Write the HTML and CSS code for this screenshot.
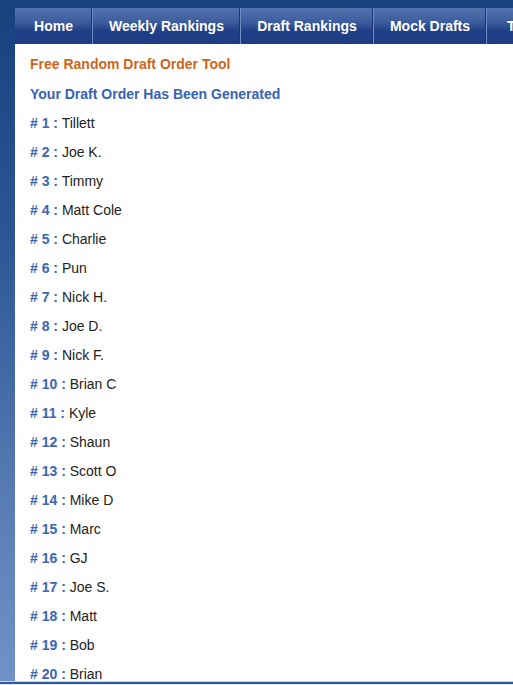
FILE: index.html
```html
<!DOCTYPE html>
<html lang="en">
<head>
  <meta charset="UTF-8">
  <meta name="viewport" content="width=device-width, initial-scale=1.0">
  <title>Free Random Draft Order Tool</title>
  <link rel="stylesheet" href="styles.css">
</head>
<body>
  <div class="page">
    <ul class="nav">
      <li class="nav-home">Home</li>
      <li class="nav-weekly">Weekly Rankings</li>
      <li class="nav-draft">Draft Rankings</li>
      <li class="nav-mock">Mock Drafts</li>
      <li class="nav-tools">Tools</li>
    </ul>

    <div class="content">
      <h1>Free Random Draft Order Tool</h1>
      <h2>Your Draft Order Has Been Generated</h2>
      <ol class="order">
        <li><b># 1 :</b> Tillett</li>
        <li><b># 2 :</b> Joe K.</li>
        <li><b># 3 :</b> Timmy</li>
        <li><b># 4 :</b> Matt Cole</li>
        <li><b># 5 :</b> Charlie</li>
        <li><b># 6 :</b> Pun</li>
        <li><b># 7 :</b> Nick H.</li>
        <li><b># 8 :</b> Joe D.</li>
        <li><b># 9 :</b> Nick F.</li>
        <li><b># 10 :</b> Brian C</li>
        <li><b># 11 :</b> Kyle</li>
        <li><b># 12 :</b> Shaun</li>
        <li><b># 13 :</b> Scott O</li>
        <li><b># 14 :</b> Mike D</li>
        <li><b># 15 :</b> Marc</li>
        <li><b># 16 :</b> GJ</li>
        <li><b># 17 :</b> Joe S.</li>
        <li><b># 18 :</b> Matt</li>
        <li><b># 19 :</b> Bob</li>
        <li><b># 20 :</b> Brian</li>
      </ol>
    </div>
  </div>
  <div class="edge"></div>
</body>
</html>
```

FILE: styles.css
```css
html, body {
  margin: 0;
  padding: 0;
  overflow: hidden;
  height: 685px;
}
body {
  font-family: "Liberation Sans", Arial, sans-serif;
  font-size: 14px;
  background: #eef2f8;
}
.page {
  height: 681px;
  overflow: hidden;
  padding-left: 15px;
  padding-top: 8px;
  box-sizing: border-box;
  background: linear-gradient(to bottom, #17407f 0%, #2d5696 35%, #5a7db5 75%, #7192c4 100%);
}
.nav {
  list-style: none;
  margin: 0;
  padding: 0;
  display: flex;
  white-space: nowrap;
  overflow: hidden;
  height: 36px;
  background: #1f3f86;
}
.nav li {
  flex: none;
  height: 36px;
  line-height: 36px;
  text-align: center;
  color: #fff;
  font-weight: bold;
  background: linear-gradient(to bottom, #5472ad 0%, #3c5c9d 40%, #223f88 62%, #1d3c84 100%);
  border-right: 1px solid #6f8cc6;
  box-shadow: inset -1px 0 0 #1a3476;
}
.nav-home { width: 77px; }
.nav-weekly { width: 147px; }
.nav-draft { width: 132px; }
.nav-mock { width: 112px; }
.nav-tools { width: 90px; text-align: left !important; padding-left: 20px; }
.content {
  background: #fff;
  padding: 6px 15px 0;
  height: 640px;
}
h1, h2 {
  margin: 0;
  font-size: 14px;
  font-weight: bold;
  line-height: 29px;
}
h1 {
  color: #cc661c;
  height: 30px;
}
h2 {
  color: #3563b5;
}
.order {
  list-style: none;
  margin: 0;
  padding: 0;
}
.order li {
  line-height: 29px;
  color: #222;
}
.order b {
  color: #3a66b5;
}
.edge {
  height: 2px;
  background: #2c5aa6;
  border-top: 1px solid #c9d5ea;
  border-bottom: 1px solid #e6ecf6;
}
```
